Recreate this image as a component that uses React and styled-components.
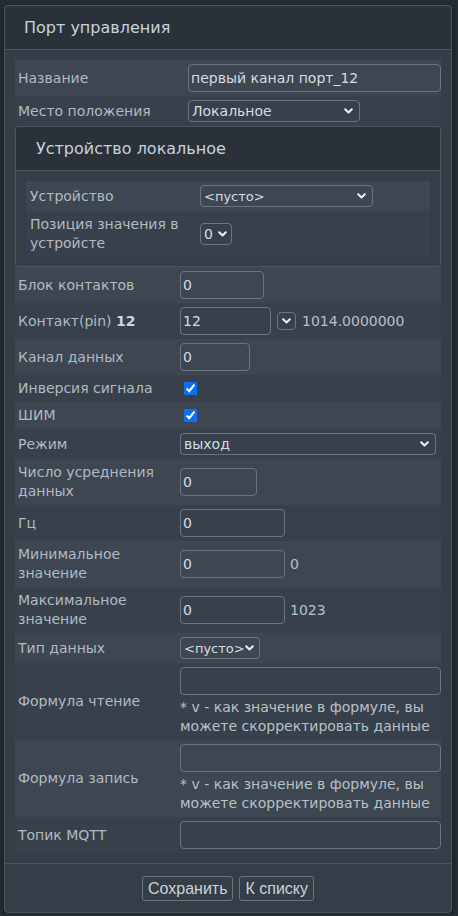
import React from "react";
import styled, { createGlobalStyle } from "styled-components";

const GlobalStyle = createGlobalStyle`
  html, body {
    margin: 0;
    padding: 0;
    background: #262c33;
  }
  body {
    font-family: "DejaVu Sans", Verdana, sans-serif;
    font-size: 14px;
    color: #b4bcc4;
  }
`;

const Card = styled.div`
  margin: 5px 6px 0 4px;
  border: 1px solid #4c555f;
  border-radius: 4px;
  background: #353d47;
  box-shadow: 0 3px 6px rgba(0, 0, 0, 0.45);
`;

const CardHeader = styled.div`
  height: 43px;
  line-height: 43px;
  padding: 0 ${(p) => p.$pl || 19}px;
  font-size: 16px;
  color: #c6d2de;
  background: #2a3139;
  border-bottom: 1px solid #4c555f;
  border-radius: 4px 4px 0 0;
`;

const CardBody = styled.div`
  padding: ${(p) => p.$pad || "10px 10px 10px 10px"};
`;

const InnerCard = styled.div`
  border: 1px solid #4c555f;
  border-radius: 3px;
  background: #353d47;
`;

const CardFooter = styled.div`
  display: flex;
  justify-content: center;
  gap: 6px;
  padding: 12px 0 11px;
  border-top: 1px solid #4c555f;
`;

const Table = styled.table`
  width: 100%;
  border-collapse: collapse;
  background: #38414b;
  font: 14px "DejaVu Sans", Verdana, sans-serif;

  tr:nth-child(odd) td {
    background: #3d4651;
  }
`;

const Label = styled.td`
  width: ${(p) => p.$w}px;
  box-sizing: border-box;
  padding: 4px ${(p) => p.$px || 3}px;
  line-height: 19px;
  vertical-align: middle;
  color: #b2bac2;

  b {
    color: #cfd5db;
  }
`;

const Field = styled.td`
  padding: 4px 0;
  line-height: 19px;
  vertical-align: middle;
`;

const FieldRow = styled.div`
  display: flex;
  align-items: center;
  gap: ${(p) => p.$gap || 6}px;
`;

const TextInput = styled.input`
  box-sizing: border-box;
  display: block;
  width: ${(p) => p.$w}px;
  height: 28px;
  margin: 0;
  padding: 0 2px;
  border: 1px solid #6c757e;
  border-radius: 4px;
  background: transparent;
  color: #d6dce2;
  font: 14px "DejaVu Sans", Verdana, sans-serif;
  outline: none;
`;

const SelectWrap = styled.span`
  position: relative;
  display: block;
  width: ${(p) => p.$w}px;
  height: ${(p) => p.$h || 22}px;
`;

const SelectBox = styled.select`
  appearance: none;
  box-sizing: border-box;
  width: 100%;
  height: 100%;
  margin: 0;
  padding: 0 ${(p) => p.$pr}px 0 3px;
  border: 1px solid #6c757e;
  border-radius: 4px;
  background: transparent;
  color: #d6dce2;
  font: ${(p) => p.$fs || 14}px "DejaVu Sans", Verdana, sans-serif;
  outline: none;

  option {
    background: #353d47;
  }
`;

const Chevron = styled.svg`
  position: absolute;
  right: ${(p) => p.$r}px;
  top: 50%;
  width: 9px;
  height: 6px;
  margin-top: -3px;
  pointer-events: none;
`;

const Check = styled.input`
  display: block;
  width: 13px;
  height: 13px;
  margin: 3px 0 3px 4px;
  accent-color: #0b6ff2;
`;

const Note = styled.span`
  color: #b8c0c8;
`;

const Hint = styled.div`
  margin-top: 3px;
  padding-right: 4px;
  line-height: 19px;
  color: #b8c0c8;
`;

const Button = styled.button`
  height: 25px;
  padding: 0 5px;
  border: 1px solid #6c757e;
  border-radius: 3px;
  background: transparent;
  color: #ccd2d8;
  font: 16px "Liberation Sans", Arial, sans-serif;
`;

function Select({ w, h, r = 7, pr = 16, fs, value, children }) {
  return (
    <SelectWrap $w={w} $h={h}>
      <SelectBox $pr={pr} $fs={fs} defaultValue={value}>
        {children}
      </SelectBox>
      <Chevron $r={r} viewBox="0 0 9 6">
        <path
          d="M1.2 1.2 L4.5 4.5 L7.8 1.2"
          fill="none"
          stroke="#eef1f4"
          strokeWidth="2"
          strokeLinecap="round"
          strokeLinejoin="round"
        />
      </Chevron>
    </SelectWrap>
  );
}

const hint = "* v - как значение в формуле, вы можете скорректировать данные";

export default function App() {
  return (
    <>
      <GlobalStyle />
      <Card>
        <CardHeader>Порт управления</CardHeader>
        <CardBody>
          <Table>
            <tbody>
              <tr>
                <Label $w={174}>Название</Label>
                <Field>
                  <TextInput $w={253} defaultValue="первый канал порт_12" />
                </Field>
              </tr>
              <tr>
                <Label $w={174}>Место положения</Label>
                <Field>
                  <Select w={172} value="local">
                    <option value="local">Локальное</option>
                  </Select>
                </Field>
              </tr>
            </tbody>
          </Table>

          <InnerCard>
            <CardHeader $pl={20}>Устройство локальное</CardHeader>
            <CardBody $pad="10px 10px 9px 10px">
              <Table>
                <tbody>
                  <tr>
                    <Label $w={174} $px={4}>Устройство</Label>
                    <Field>
                      <Select w={173} fs={13} value="">
                        <option value="">&lt;пусто&gt;</option>
                      </Select>
                    </Field>
                  </tr>
                  <tr>
                    <Label $w={174} $px={4}>Позиция значения в устройсте</Label>
                    <Field>
                      <Select w={32} r={5} pr={12} value="0">
                        <option value="0">0</option>
                      </Select>
                    </Field>
                  </tr>
                </tbody>
              </Table>
            </CardBody>
          </InnerCard>

          <Table>
            <tbody>
              <tr>
                <Label $w={166}>Блок контактов</Label>
                <Field>
                  <TextInput $w={84} defaultValue="0" />
                </Field>
              </tr>
              <tr>
                <Label $w={166}>
                  Контакт(pin) <b>12</b>
                </Label>
                <Field>
                  <FieldRow>
                    <TextInput $w={91} defaultValue="12" />
                    <Select w={19} h={18} r={5} pr={0} value="12">
                      <option value="12"></option>
                    </Select>
                    <Note>1014.0000000</Note>
                  </FieldRow>
                </Field>
              </tr>
              <tr>
                <Label $w={166}>Канал данных</Label>
                <Field>
                  <TextInput $w={70} defaultValue="0" />
                </Field>
              </tr>
              <tr>
                <Label $w={166}>Инверсия сигнала</Label>
                <Field>
                  <Check type="checkbox" defaultChecked />
                </Field>
              </tr>
              <tr>
                <Label $w={166}>ШИМ</Label>
                <Field>
                  <Check type="checkbox" defaultChecked />
                </Field>
              </tr>
              <tr>
                <Label $w={166}>Режим</Label>
                <Field>
                  <Select w={256} value="out">
                    <option value="out">выход</option>
                  </Select>
                </Field>
              </tr>
              <tr>
                <Label $w={166}>Число усреднения данных</Label>
                <Field>
                  <TextInput $w={77} defaultValue="0" />
                </Field>
              </tr>
              <tr>
                <Label $w={166}>Гц</Label>
                <Field>
                  <TextInput $w={105} defaultValue="0" />
                </Field>
              </tr>
              <tr>
                <Label $w={166}>Минимальное значение</Label>
                <Field>
                  <FieldRow $gap={5}>
                    <TextInput $w={105} defaultValue="0" />
                    <Note>0</Note>
                  </FieldRow>
                </Field>
              </tr>
              <tr>
                <Label $w={166}>Максимальное значение</Label>
                <Field>
                  <FieldRow $gap={5}>
                    <TextInput $w={105} defaultValue="0" />
                    <Note>1023</Note>
                  </FieldRow>
                </Field>
              </tr>
              <tr>
                <Label $w={166}>Тип данных</Label>
                <Field>
                  <Select w={80} r={6} pr={10} fs={13} value="">
                    <option value="">&lt;пусто&gt;</option>
                  </Select>
                </Field>
              </tr>
              <tr>
                <Label $w={166}>Формула чтение</Label>
                <Field>
                  <TextInput $w={261} defaultValue="" />
                  <Hint>{hint}</Hint>
                </Field>
              </tr>
              <tr>
                <Label $w={166}>Формула запись</Label>
                <Field>
                  <TextInput $w={261} defaultValue="" />
                  <Hint>{hint}</Hint>
                </Field>
              </tr>
              <tr>
                <Label $w={166}>Топик MQTT</Label>
                <Field>
                  <TextInput $w={261} defaultValue="" />
                </Field>
              </tr>
            </tbody>
          </Table>
        </CardBody>
        <CardFooter>
          <Button>Сохранить</Button>
          <Button>К списку</Button>
        </CardFooter>
      </Card>
    </>
  );
}
